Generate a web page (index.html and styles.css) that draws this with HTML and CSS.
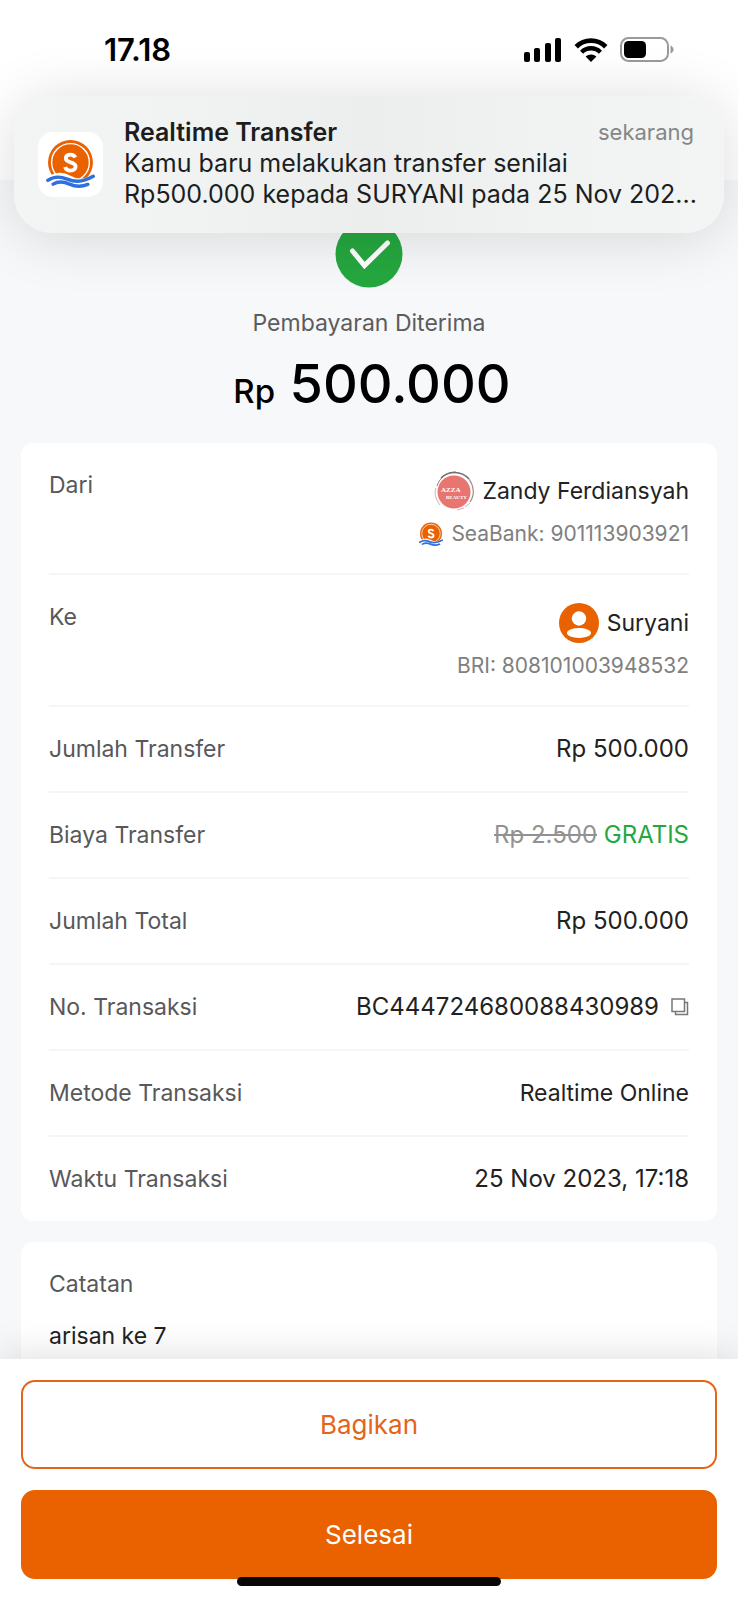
FILE: index.html
```html
<!DOCTYPE html>
<html lang="id">
<head>
<meta charset="utf-8">
<meta name="viewport" content="width=device-width, initial-scale=1">
<title>Pembayaran Diterima</title>
<link rel="stylesheet" href="styles.css">
</head>
<body>
<svg class="defs" aria-hidden="true">
  <symbol id="seabank" viewBox="0 0 48 48">
    <circle cx="24" cy="23" r="22" fill="#ea6100"/>
    <circle cx="24" cy="23" r="18.500" fill="none" stroke="#fff" stroke-width="1.400"/>
    <path d="M28.600 18.200c-.8-2-2.500-2.900-4.700-2.900-2.700 0-4.500 1.400-4.500 3.600 0 2.500 2 3.200 4.600 3.900 2.700.7 5 1.500 5 4.200 0 2.500-2.100 4-4.900 4-2.700 0-4.700-1.200-5.400-3.600" fill="none" stroke="#fff" stroke-width="3.800"/>
    <path d="M3 36q11-6 21 0t21-1l3 6v9H0v-9z" fill="#fff"/>
    <path d="M1.800 40.500c7-5 13-3.600 19-1.200s13 4.200 25.500-2.800" fill="none" stroke="#2f70dc" stroke-width="3.400" stroke-linecap="round"/>
    <path d="M7 44.200c6-3.700 11-2.200 16 0s10.500 3.300 18 .3" fill="none" stroke="#2f70dc" stroke-width="3.400" stroke-linecap="round"/>
  </symbol>
</svg>
<div class="screen">
  <header class="topbar">
    <div class="status">
      <time class="clock">17.18</time>
      <div class="indicators">
        <svg width="38" height="24" viewBox="0 0 38 24" aria-label="Sinyal">
          <rect x="0" y="14" width="6" height="10" rx="2"/>
          <rect x="10" y="10" width="6" height="14" rx="2"/>
          <rect x="21" y="5" width="6" height="19" rx="2"/>
          <rect x="31" y="0" width="6" height="24" rx="2"/>
        </svg>
        <svg width="34" height="24" viewBox="0 0 34 24" aria-label="Wi-Fi">
          <path d="M2.200 8.800a21 21 0 0 1 29.600 0" fill="none" stroke="#000" stroke-width="4.800"/>
          <path d="M7.600 14.200a13.300 13.300 0 0 1 18.800 0" fill="none" stroke="#000" stroke-width="4.400"/>
          <path d="M17 24l-5.400-5.500a8 8 0 0 1 10.800 0z"/>
        </svg>
        <svg width="54" height="26" viewBox="0 0 54 26" aria-label="Baterai">
          <rect x="1" y="1" width="47" height="23" rx="7.500" fill="none" stroke="#9a9a9a" stroke-width="2"/>
          <rect x="4" y="4" width="22" height="17" rx="4.500"/>
          <path d="M50.500 8.500c4 1.500 4 6.500 0 8z" fill="#9a9a9a"/>
        </svg>
      </div>
    </div>
  </header>

  <main class="content">
    <section class="summary">
      <svg class="check" viewBox="0 0 68 68" aria-hidden="true">
        <circle cx="34" cy="34" r="33.500" fill="#25a73f"/>
        <path d="M17.500 31l12 14.500L52.500 23" fill="none" stroke="#fff" stroke-width="5" stroke-linecap="round" stroke-linejoin="miter"/>
      </svg>
      <h1 class="result">Pembayaran Diterima</h1>
      <p class="amount"><span class="currency">Rp</span> 500.000</p>
    </section>

    <dl class="card details">
      <div class="row">
        <dt>Dari</dt>
        <dd class="party">
          <span class="name">
            <svg class="avatar" viewBox="0 0 40 40" aria-hidden="true">
              <circle cx="20" cy="21" r="16.500" fill="#e87570"/>
              <path d="M3 15C6 6 13 1 22 1" fill="none" stroke="#8f7f80" stroke-width="1"/>
              <path d="M7 7C14 0 27-1 35 8" fill="none" stroke="#776a6e" stroke-width="1.400"/>
              <path d="M35 8c5 7 6 16 1 23" fill="none" stroke="#a08d8c" stroke-width="1.200"/>
              <path d="M31 36l5-4M2 17c-2 6 0 12 4 17M23 39l7-2" fill="none" stroke="#d8aea8" stroke-width="1"/>
              <text class="brand" x="7" y="21">AZZA</text>
              <text class="brand brand-sub" x="12" y="28">BEAUTY</text>
            </svg>
            Zandy Ferdiansyah
          </span>
          <span class="account">
            <svg class="bank" viewBox="0 0 48 48" aria-hidden="true"><use href="#seabank"/></svg>
            SeaBank: 901113903921
          </span>
        </dd>
      </div>
      <div class="row">
        <dt>Ke</dt>
        <dd class="party">
          <span class="name">
            <svg class="avatar" viewBox="0 0 40 40" aria-hidden="true">
              <circle cx="20" cy="20" r="20" fill="#ea6100"/>
              <circle cx="20" cy="15.500" r="7.200" fill="#fff"/>
              <ellipse cx="20" cy="30" rx="12" ry="5" fill="#fff"/>
            </svg>
            Suryani
          </span>
          <span class="account">BRI: 808101003948532</span>
        </dd>
      </div>
      <div class="row"><dt>Jumlah Transfer</dt><dd class="figure">Rp 500.000</dd></div>
      <div class="row"><dt>Biaya Transfer</dt><dd class="figure"><s>Rp 2.500</s> <span class="free">GRATIS</span></dd></div>
      <div class="row"><dt>Jumlah Total</dt><dd class="figure">Rp 500.000</dd></div>
      <div class="row">
        <dt>No. Transaksi</dt>
        <dd class="figure reference">
          BC444724680088430989
          <button class="copy" type="button" aria-label="Salin">
            <svg width="18" height="18" viewBox="0 0 18 18" fill="none" stroke="#777" stroke-width="1.500">
              <path d="M1 1h12.500v12.500H1zM13.500 4.500h3v12h-12v-3"/>
            </svg>
          </button>
        </dd>
      </div>
      <div class="row"><dt>Metode Transaksi</dt><dd>Realtime Online</dd></div>
      <div class="row"><dt>Waktu Transaksi</dt><dd class="figure">25 Nov 2023, 17:18</dd></div>
    </dl>

    <section class="card note">
      <h2>Catatan</h2>
      <p>arisan ke 7</p>
    </section>
  </main>

  <footer class="actions">
    <button class="btn btn-outline" type="button">Bagikan</button>
    <button class="btn btn-solid" type="button">Selesai</button>
    <div class="home-indicator"></div>
  </footer>

  <aside class="notification" role="alert">
    <div class="app-icon"><svg viewBox="0 0 48 48" aria-hidden="true"><use href="#seabank"/></svg></div>
    <div class="message">
      <div class="message-head"><strong>Realtime Transfer</strong><time>sekarang</time></div>
      <p>Kamu baru melakukan transfer senilai<br>Rp500.000 kepada SURYANI pada 25 Nov 202...</p>
    </div>
  </aside>
</div>
</body>
</html>
```

FILE: styles.css
```css
* { box-sizing: border-box; }

body, h1, h2, p, dl, dd { margin: 0; }

body {
  background: #f7f8fa;
  color: #222;
  font: 400 23px/28px Inter, "Liberation Sans", sans-serif;
}

button { font: inherit; cursor: pointer; }

.defs { position: absolute; width: 0; height: 0; }

.screen {
  position: relative;
  display: flex;
  flex-direction: column;
  height: 100vh;
  overflow: hidden;
}

.topbar {
  flex: none;
  height: 180px;
  padding: 32px 64px 0 104px;
  background: #fff;
}

.status {
  display: flex;
  justify-content: space-between;
  align-items: center;
  height: 36px;
}

.clock { color: #000; font-size: 31px; font-weight: 600; }

.indicators { display: flex; align-items: center; gap: 12px; }

.content {
  flex: 1;
  min-height: 0;
  overflow: hidden;
  padding: 40px 21px 0;
}

.summary {
  display: flex;
  flex-direction: column;
  align-items: center;
  padding-bottom: 20px;
}

.check { width: 68px; height: 68px; }

.result {
  margin-top: 21px;
  color: #5c5c5e;
  font-size: 23px;
  font-weight: 400;
}

.amount {
  margin-top: 15px;
  padding-left: 6px;
  color: #000;
  font-size: 54px;
  font-weight: 500;
  line-height: 64px;
}

.currency { font-size: 33px; }

.card {
  padding: 0 28px;
  border-radius: 12px;
  background: #fff;
}

.row {
  display: flex;
  justify-content: space-between;
  padding: 28px 0;
  border-bottom: 2px solid #f5f5f6;
}

.row:last-child { border-bottom: 0; }

dt, .note h2 { color: #58585a; }

.figure { font-size: 24px; }

s { color: #929292; }

.free { color: #25a73f; }

.party {
  display: flex;
  flex-direction: column;
  align-items: flex-end;
  gap: 12px;
}

.name, .account, .reference { display: flex; align-items: center; }

.name { gap: 8px; }

.avatar { width: 40px; height: 40px; overflow: visible; }

.brand { fill: #fff; font: 700 7px "Liberation Serif", serif; }

.brand-sub { font-size: 5px; }

.account { gap: 8px; height: 22px; color: #808080; font-size: 21px; }

.bank { width: 24px; height: 24px; }

.reference { gap: 12px; }

.copy {
  display: flex;
  padding: 0;
  border: 0;
  background: none;
}

.note {
  margin-top: 21px;
  padding: 28px;
}

.note h2 { font-size: 23px; font-weight: 400; }

.note p { margin-top: 24px; }

.actions {
  position: relative;
  display: flex;
  flex: none;
  flex-direction: column;
  gap: 21px;
  padding: 21px;
  background: #fff;
  box-shadow: 0 0 40px rgb(0 0 0 / 15%);
}

.btn {
  height: 89px;
  border: 2px solid #e4641a;
  border-radius: 14px;
  font-size: 26px;
}

.btn-outline { background: #fff; color: #e4641a; }

.btn-solid { border-color: #ea6100; background: #ea6100; color: #fff; }

.home-indicator {
  position: absolute;
  bottom: 14px;
  left: 50%;
  width: 264px;
  height: 9px;
  margin-left: -132px;
  border-radius: 5px;
  background: #080808;
}

.notification {
  position: absolute;
  top: 96px;
  right: 14px;
  left: 14px;
  display: flex;
  align-items: center;
  gap: 21px;
  height: 137px;
  padding: 0 30px 0 24px;
  border-radius: 38px;
  background: linear-gradient(90deg, #f3f5f5, #f1f3f3 25%, #eceeee 50%, #f1f3f3 75%, #f3f5f5);
  box-shadow: 0 4px 60px rgb(0 0 0 / 14%);
  color: #1c1e1e;
}

.app-icon {
  flex: none;
  width: 65px;
  height: 65px;
  padding: 7px 8px 9px;
  border-radius: 15px;
  background: #fff;
}

.app-icon svg { display: block; width: 49px; height: 49px; }

.message {
  flex: 1;
  min-width: 0;
  padding-bottom: 3px;
  font-size: 25px;
  line-height: 31px;
  white-space: nowrap;
}

.message-head { display: flex; justify-content: space-between; }

.message-head strong { font-weight: 600; }

.message-head time { color: #858787; font-size: 22px; }
```
